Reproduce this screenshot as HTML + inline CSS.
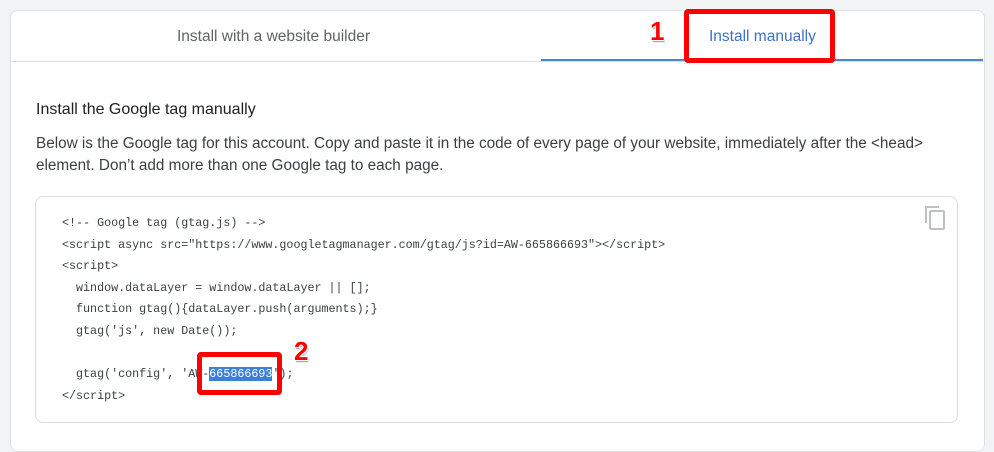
<!DOCTYPE html>
<html><head><style>
body{margin:0;width:994px;height:431px;background:#f1f3f4;font-family:"Liberation Sans",sans-serif;position:relative;overflow:hidden}
.card{position:absolute;left:10px;top:10px;width:973px;height:440px;background:#fff;border:1px solid #e0e0e0;border-radius:8px}
.tabs{position:absolute;left:10px;top:10px;width:973px;height:51px;border-bottom:1px solid #e0e0e0}
.t{position:absolute;top:28px;font-size:15.5px}
.ul{position:absolute;left:541px;top:59px;width:442px;height:2px;background:#4a86d8}
.h{position:absolute;left:36px;top:101px;font-size:16px;color:#202124}
.p{position:absolute;left:36px;top:133px;width:900px;font-size:15.3px;line-height:21.5px;color:#3c4043}
.code{position:absolute;left:35px;top:196px;width:921px;height:225px;border:1px solid #dadce0;border-radius:8px;background:#fff}
pre{position:absolute;left:62px;top:213px;margin:0;font-family:"Liberation Mono",monospace;font-size:11.7px;line-height:21.6px;color:#3c4043}
.red{position:absolute;border:5px solid #f00;border-radius:4px;box-sizing:border-box}
.num{position:absolute;font-weight:bold;color:#f00;font-size:26px;text-shadow:1px 1px 0 #fff,-1px -1px 0 #fff,1px -1px 0 #fff,-1px 1px 0 #fff,1px 2px 1px #999}
.hl{background:#3b7fd9;color:#fff}
</style></head><body>
<div class="card"></div>
<div class="tabs"></div>
<div class="t" style="left:177px;color:#5f6368">Install with a website builder</div>
<div class="t" style="left:709px;color:#3a73c4">Install manually</div>
<div class="ul"></div>
<div class="red" style="left:684px;top:9px;width:151px;height:54px"></div>
<div class="num" style="left:650px;top:16px">1</div>
<div class="h">Install the Google tag manually</div>
<div class="p">Below is the Google tag for this account. Copy and paste it in the code of every page of your website, immediately after the &lt;head&gt; element. Don’t add more than one Google tag to each page.</div>
<div class="code"></div>
<svg style="position:absolute;left:923px;top:204px" width="24" height="27" viewBox="0 0 24 27"><path d="M3 19V3h13" fill="none" stroke="#bdc1c6" stroke-width="2"/><rect x="7" y="7" width="14" height="18" rx="1" fill="#fff" stroke="#bdc1c6" stroke-width="2"/></svg>
<pre>&lt;!-- Google tag (gtag.js) --&gt;
&lt;script async src="https://www.googletagmanager.com/gtag/js?id=AW-665866693"&gt;&lt;/script&gt;
&lt;script&gt;
  window.dataLayer = window.dataLayer || [];
  function gtag(){dataLayer.push(arguments);}
  gtag('js', new Date());

  gtag('config', 'AW-<span class="hl">665866693</span>');
&lt;/script&gt;</pre>
<div class="red" style="left:197px;top:352px;width:85px;height:43px"></div>
<div class="num" style="left:294px;top:336px">2</div>
</body></html>
